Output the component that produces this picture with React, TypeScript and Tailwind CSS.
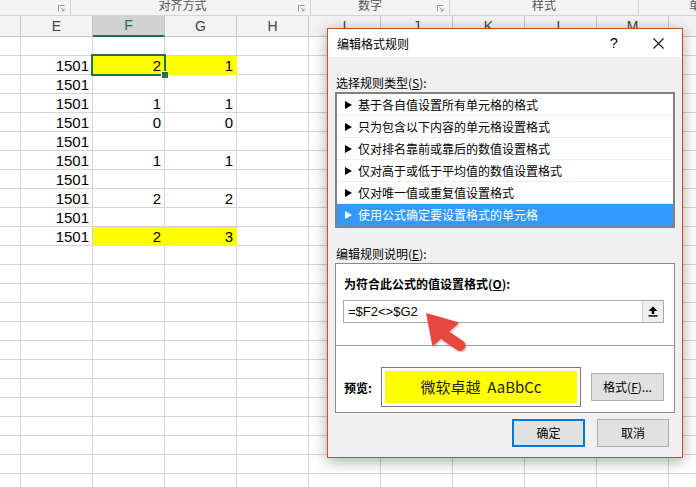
import React from 'react';

type Row = { e?: string; f?: string; g?: string; y?: boolean };

const COLS = ['E', 'F', 'G', 'H', 'I', 'J', 'K', 'L', 'M'];

const rows: Row[] = [
  {},
  { e: '1501', f: '2', g: '1', y: true },
  { e: '1501' },
  { e: '1501', f: '1', g: '1' },
  { e: '1501', f: '0', g: '0' },
  { e: '1501' },
  { e: '1501', f: '1', g: '1' },
  { e: '1501' },
  { e: '1501', f: '2', g: '2' },
  { e: '1501' },
  { e: '1501', f: '2', g: '3', y: true },
  ...Array.from({ length: 14 }, () => ({})),
];

const ITEMS = [
  '基于各自值设置所有单元格的格式',
  '只为包含以下内容的单元格设置格式',
  '仅对排名靠前或靠后的数值设置格式',
  '仅对高于或低于平均值的数值设置格式',
  '仅对唯一值或重复值设置格式',
  '使用公式确定要设置格式的单元格',
];

function Launcher({ className }: { className: string }) {
  return (
    <svg className={className} width="7" height="7" viewBox="0 0 7 7" fill="none" stroke="#9a9a9a" strokeWidth="1">
      <path d="M0.5 6.5V0.5H6.5" />
      <path d="M2.5 2.5L6 6M6 3.5V6H3.5" />
    </svg>
  );
}

function Cell({ text, yellow }: { text?: string; yellow?: boolean }) {
  return (
    <div
      className={
        yellow
          ? 'w-[72px] shrink-0 flex items-center justify-end pr-[3px] border-r border-b border-[#ffff00] bg-[#ffff00]'
          : 'w-[72px] shrink-0 flex items-center justify-end pr-[3px] border-r border-b border-[#d4d4d4]'
      }
    >
      {text}
    </div>
  );
}

function Tri({ color }: { color: string }) {
  return (
    <svg width="7" height="8" viewBox="0 0 7 8" className="shrink-0">
      <path d="M0 0L7 4L0 8Z" fill={color} />
    </svg>
  );
}

export default function App() {
  return (
    <div className="relative w-[696px] h-[487px] overflow-hidden bg-white">
      {/* Ribbon strip */}
      <div className="flex h-[16px] bg-[#f3f3f3] border-b border-[#d5d5d5] text-[12px] leading-[9px] text-[#555] font-['Noto_Sans_CJK_SC',sans-serif] overflow-hidden">
        <div className="relative w-[71px] shrink-0 border-r border-[#d5d5d5]">
          <Launcher className="absolute right-[5px] bottom-[3px]" />
        </div>
        <div className="relative w-[240px] shrink-0 border-r border-[#d5d5d5] flex justify-center pr-[16px]">
          对齐方式
          <Launcher className="absolute right-[5px] bottom-[3px]" />
        </div>
        <div className="relative w-[139px] shrink-0 border-r border-[#d5d5d5] flex justify-center pr-[20px]">
          数字
          <Launcher className="absolute right-[5px] bottom-[3px]" />
        </div>
        <div className="w-[189px] shrink-0 border-r border-[#d5d5d5] flex justify-center">样式</div>
        <div className="flex-1 pl-[50px] whitespace-nowrap">单</div>
      </div>

      {/* Column header */}
      <div className="flex h-[21px] bg-[#f3f3f3] text-[14px] text-[#444] font-['Liberation_Sans',sans-serif]">
        <div className="w-[21px] shrink-0 border-r border-b border-[#c6c6c6]" />
        {COLS.map((c) =>
          c === 'F' ? (
            <div
              key={c}
              className="w-[72px] shrink-0 flex items-center justify-center bg-[#d2d2d2] text-[#217346] border-r border-r-[#c6c6c6] border-b-2 border-b-[#217346]"
            >
              {c}
            </div>
          ) : (
            <div key={c} className="w-[72px] shrink-0 flex items-center justify-center border-r border-b border-[#c6c6c6]">
              {c}
            </div>
          )
        )}
        <div className="flex-1 border-b border-[#c6c6c6]" />
      </div>

      {/* Grid */}
      <div className="flex flex-col text-[15px] leading-none text-black font-['Liberation_Sans',sans-serif]">
        {rows.map((r, i) => (
          <div key={i} className="flex h-[19px]">
            <div className="w-[21px] shrink-0 border-r border-b border-[#d4d4d4]" />
            <Cell text={r.e} />
            <Cell text={r.f} yellow={r.y} />
            <Cell text={r.g} yellow={r.y} />
            <Cell />
            <Cell />
            <Cell />
            <Cell />
            <Cell />
            <Cell />
            <div className="flex-1 border-b border-[#d4d4d4]" />
          </div>
        ))}
      </div>

      {/* Selected cell */}
      <div className="absolute left-[91px] top-[54px] w-[75px] h-[22px] border-2 border-[#217346]" />
      <div className="absolute left-[161px] top-[71px] w-[7px] h-[7px] bg-[#217346] border-l border-t border-white" />

      {/* Dialog */}
      <div className="absolute left-[327px] top-[28px] w-[356px] h-[430px] border border-[#d24a2a] bg-[#f0f0f0] shadow-[0_3px_14px_rgba(0,0,0,0.35)] flex flex-col text-[12px] text-black font-['Noto_Sans_CJK_SC',sans-serif]">
        <div className="h-[28px] shrink-0 bg-white flex items-center pl-[9px] pr-[18px]">
          <span className="leading-[17px]">编辑格式规则</span>
          <span className="ml-auto w-[10px] text-center text-[14px] leading-[17px] font-['Liberation_Sans',sans-serif]">?</span>
          <svg className="ml-[34px]" width="11" height="11" viewBox="0 0 11 11" stroke="#111" strokeWidth="1.1">
            <path d="M0.5 0.5L10.5 10.5M10.5 0.5L0.5 10.5" />
          </svg>
        </div>

        <div className="flex flex-col pl-[7px] pr-[7px] pt-[17px]">
          <div className="leading-[17px] pl-[1px]">
            选择规则类型(<span className="underline">S</span>):
          </div>
          <div className="mt-[1px] w-[340px] h-[136px] border-2 border-[#828282] bg-white flex flex-col">
            {ITEMS.map((t, i) =>
              i === 5 ? (
                <div key={t} className="h-[22px] flex items-center pl-[8px] gap-[6px] bg-[#3399ff] text-white leading-[22px]">
                  <Tri color="#ffffff" />
                  {t}
                </div>
              ) : (
                <div key={t} className="h-[22px] flex items-center pl-[8px] gap-[6px] border-b border-[#efefef] leading-[21px]">
                  <Tri color="#000000" />
                  {t}
                </div>
              )
            )}
          </div>

          <div className="mt-[17px] leading-[17px] pl-[1px]">
            编辑规则说明(<span className="underline">E</span>):
          </div>
          <div className="mt-[1px] w-[340px] h-[150px] border border-[#8a8a8a] bg-white flex flex-col">
            <div className="pt-[11px] pl-[8px] leading-[17px] font-bold">
              为符合此公式的值设置格式(<span className="underline">O</span>):
            </div>
            <div className="mt-[8px] ml-[7px] w-[321px] h-[23px] border border-[#a9a9a9] flex items-center">
              <span className="pl-[4px] text-[13px] text-black font-['Liberation_Sans',sans-serif]">=$F2&lt;&gt;$G2</span>
              <div className="ml-auto w-[21px] h-full bg-[#efefef] border-l border-[#d0d0d0] flex items-center justify-center">
                <svg width="10" height="11" viewBox="0 0 10 11" fill="#000">
                  <path d="M5 0.5L9.5 5H6.2V8H3.8V5H0.5Z" />
                  <rect x="0.5" y="9.2" width="9" height="1.4" />
                </svg>
              </div>
            </div>
            <div className="mt-[22px] h-px bg-[#a0a0a0]" />
            <div className="mt-[21px] h-[40px] flex items-center pl-[8px]">
              <div className="w-[37px] font-bold leading-[17px]">预览:</div>
              <div className="w-[200px] h-[40px] border border-[#7a7a7a] p-[3px]">
                <div className="h-full bg-[#ffff00] flex items-center justify-center text-[15px] text-[#222] whitespace-pre">
                  微软卓越  AaBbCc
                </div>
              </div>
              <div className="ml-[10px] w-[73px] h-[28px] border border-[#adadad] bg-[#e1e1e1] flex items-center justify-center">
                格式(<span className="underline">F</span>)...
              </div>
            </div>
          </div>
        </div>

        <div className="mt-[6px] flex justify-end pr-[13px] gap-[12px]">
          <div className="w-[73px] h-[28px] border-2 border-[#0078d7] bg-[#e1e1e1] flex items-center justify-center">确定</div>
          <div className="w-[72px] h-[28px] border border-[#adadad] bg-[#e1e1e1] flex items-center justify-center">取消</div>
        </div>
      </div>

      {/* Red callout arrow */}
      <svg className="absolute left-0 top-0 pointer-events-none" width="696" height="487" viewBox="0 0 696 487">
        <defs>
          <filter id="sh" x="-20%" y="-20%" width="140%" height="140%">
            <feDropShadow dx="1" dy="1.5" stdDeviation="1.2" floodColor="#000" floodOpacity="0.25" />
          </filter>
        </defs>
        <g filter="url(#sh)" fill="#e8463d" stroke="#e8463d">
          <line x1="446" y1="336" x2="460" y2="345.5" strokeWidth="11" strokeLinecap="round" />
          <polygon points="427,314 458,323 433,345" strokeWidth="1.5" strokeLinejoin="round" />
        </g>
      </svg>
    </div>
  );
}
